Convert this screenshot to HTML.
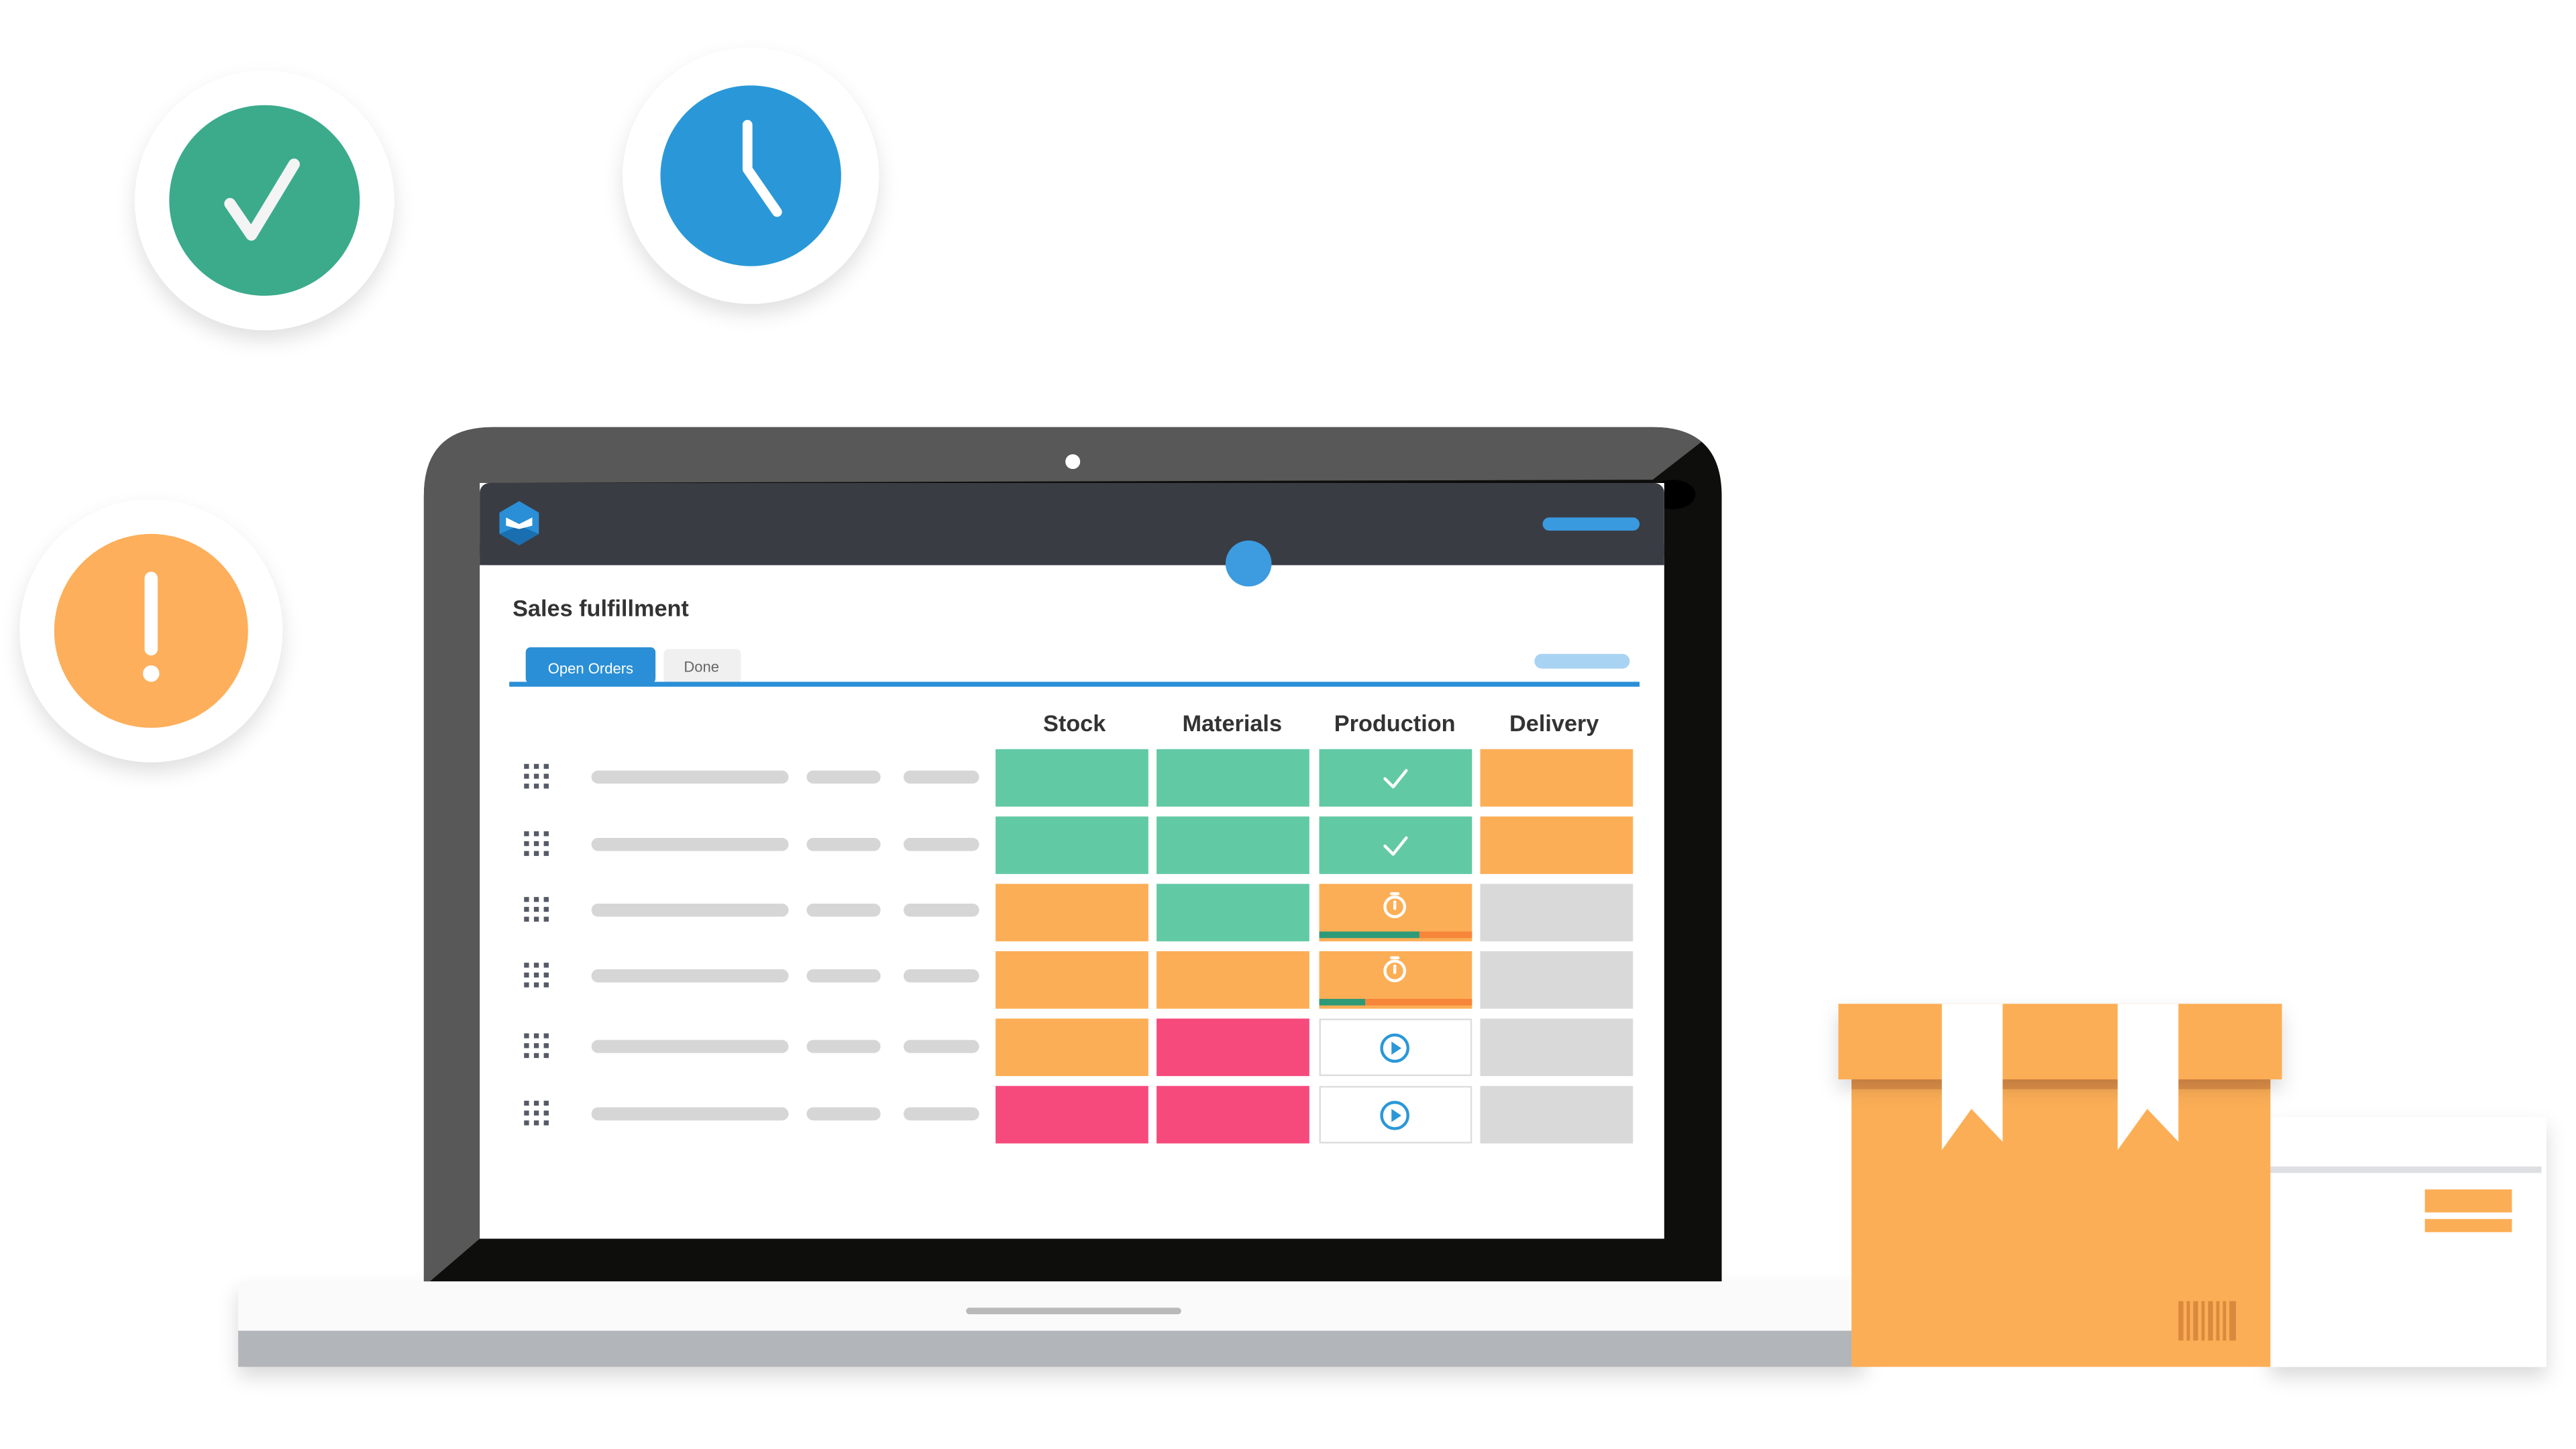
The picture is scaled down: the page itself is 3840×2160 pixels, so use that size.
<!DOCTYPE html>
<html><head><meta charset="utf-8"><style>
html,body{margin:0;padding:0;background:#fff;width:3840px;height:2160px;overflow:hidden}
svg{display:block}
text{font-family:"Liberation Sans",sans-serif}
</style></head><body>
<svg width="3840" height="2160" viewBox="0 0 1568 882" preserveAspectRatio="none" xmlns="http://www.w3.org/2000/svg">
<defs>
<filter id="sh" x="-30%" y="-30%" width="160%" height="170%"><feDropShadow dx="0" dy="6" stdDeviation="6" flood-color="#000" flood-opacity="0.12"/></filter>
<filter id="sh2" x="-10%" y="-30%" width="120%" height="170%"><feDropShadow dx="0" dy="6" stdDeviation="6" flood-color="#000" flood-opacity="0.15"/></filter>
<clipPath id="lid"><path d="M258 780 L258 302 Q258 260 300 260 L1006 260 Q1048 260 1048 302 L1048 780 Z"/></clipPath>
</defs>
<!-- floating circles -->
<circle cx="161" cy="122" r="79" fill="#fff" filter="url(#sh)"/>
<circle cx="161" cy="122" r="58" fill="#3bab8c"/>
<path d="M140 124 L153 143 L179 100" fill="none" stroke="#f4f4f4" stroke-width="7" stroke-linecap="round" stroke-linejoin="round"/>
<circle cx="457" cy="107" r="78" fill="#fff" filter="url(#sh)"/>
<circle cx="457" cy="107" r="55" fill="#2a98d8"/>
<path d="M455 76 L455 103 L473 129" fill="none" stroke="#fff" stroke-width="6" stroke-linecap="round" stroke-linejoin="round"/>
<circle cx="92" cy="384" r="80" fill="#fff" filter="url(#sh)"/>
<circle cx="92" cy="384" r="59" fill="#fdaf5c"/>
<line x1="92" y1="352" x2="92" y2="395" stroke="#fff" stroke-width="8" stroke-linecap="round"/>
<circle cx="92" cy="410" r="5" fill="#fff"/>
<!-- laptop lid -->
<path d="M258 780 L258 302 Q258 260 300 260 L1006 260 Q1048 260 1048 302 L1048 780 Z" fill="#0e0e0d"/>
<path clip-path="url(#lid)" d="M250 790 L292 754 L292 294 L1006 292 L1060 250 L250 250 Z" fill="#585858"/>
<ellipse cx="1018" cy="301" rx="14" ry="9" fill="#000"/>
<circle cx="653" cy="281" r="4.5" fill="#fff"/>
<rect x="292" y="294" width="721" height="460" fill="#fff"/>
<rect x="292" y="294" width="721" height="50" rx="6" fill="#3a3c44"/>
<rect x="292" y="330" width="721" height="14" fill="#3a3c44"/>
<!-- logo -->
<path d="M316 305 L328 312 L328 325 L316 332 L304 325 L304 312 Z" fill="#2a8fd6"/>
<path d="M316 320 L328 325 L316 332 L304 325 Z" fill="#1a6fb0"/>
<path d="M308 315 L316 319 L324 315 L324 320 L316 322 L308 320 Z" fill="#fff"/>
<rect x="939" y="315" width="59" height="8" rx="4" fill="#3a9ae0"/>
<circle cx="760" cy="343" r="14" fill="#3d9be0"/>
<text x="312" y="375" font-size="14" font-weight="bold" fill="#333">Sales fulfillment</text>
<rect x="320" y="394" width="79" height="22" rx="3" fill="#2a8fd6"/>
<text x="359.5" y="410" font-size="9" fill="#fff" text-anchor="middle">Open Orders</text>
<rect x="404" y="395" width="47" height="21" rx="3" fill="#f0f0f0"/>
<text x="427" y="409" font-size="9" fill="#666" text-anchor="middle">Done</text>
<rect x="310" y="415" width="688" height="3" fill="#2a8fd6"/>
<rect x="934" y="398" width="58" height="9" rx="4.5" fill="#a9d3f2"/>
<g font-size="14" font-weight="bold" fill="#333" text-anchor="middle">
<text x="654" y="445">Stock</text><text x="750" y="445">Materials</text><text x="849" y="445">Production</text><text x="946" y="445">Delivery</text>
</g>
<!-- rows -->
<g fill="#d6d6d6">
<rect x="360" y="469" width="120" height="8" rx="4"/><rect x="491" y="469" width="45" height="8" rx="4"/><rect x="550" y="469" width="46" height="8" rx="4"/>
<rect x="360" y="510" width="120" height="8" rx="4"/><rect x="491" y="510" width="45" height="8" rx="4"/><rect x="550" y="510" width="46" height="8" rx="4"/>
<rect x="360" y="550" width="120" height="8" rx="4"/><rect x="491" y="550" width="45" height="8" rx="4"/><rect x="550" y="550" width="46" height="8" rx="4"/>
<rect x="360" y="590" width="120" height="8" rx="4"/><rect x="491" y="590" width="45" height="8" rx="4"/><rect x="550" y="590" width="46" height="8" rx="4"/>
<rect x="360" y="633" width="120" height="8" rx="4"/><rect x="491" y="633" width="45" height="8" rx="4"/><rect x="550" y="633" width="46" height="8" rx="4"/>
<rect x="360" y="674" width="120" height="8" rx="4"/><rect x="491" y="674" width="45" height="8" rx="4"/><rect x="550" y="674" width="46" height="8" rx="4"/>
</g>
<g fill="#555a66">
<g id="dots"><rect x="319" y="465" width="3" height="3"/><rect x="325" y="465" width="3" height="3"/><rect x="331" y="465" width="3" height="3"/><rect x="319" y="471" width="3" height="3"/><rect x="325" y="471" width="3" height="3"/><rect x="331" y="471" width="3" height="3"/><rect x="319" y="477" width="3" height="3"/><rect x="325" y="477" width="3" height="3"/><rect x="331" y="477" width="3" height="3"/></g>
<use href="#dots" y="41"/><use href="#dots" y="81"/><use href="#dots" y="121"/><use href="#dots" y="164"/><use href="#dots" y="205"/>
</g>
<!-- cells -->
<g>
<rect x="606" y="456" width="93" height="35" fill="#62c9a5"/><rect x="704" y="456" width="93" height="35" fill="#62c9a5"/><rect x="803" y="456" width="93" height="35" fill="#62c9a5"/><rect x="901" y="456" width="93" height="35" fill="#fcae56"/>
<rect x="606" y="497" width="93" height="35" fill="#62c9a5"/><rect x="704" y="497" width="93" height="35" fill="#62c9a5"/><rect x="803" y="497" width="93" height="35" fill="#62c9a5"/><rect x="901" y="497" width="93" height="35" fill="#fcae56"/>
<rect x="606" y="538" width="93" height="35" fill="#fcae56"/><rect x="704" y="538" width="93" height="35" fill="#62c9a5"/><rect x="803" y="538" width="93" height="35" fill="#fcae56"/><rect x="901" y="538" width="93" height="35" fill="#d9d9d9"/>
<rect x="606" y="579" width="93" height="35" fill="#fcae56"/><rect x="704" y="579" width="93" height="35" fill="#fcae56"/><rect x="803" y="579" width="93" height="35" fill="#fcae56"/><rect x="901" y="579" width="93" height="35" fill="#d9d9d9"/>
<rect x="606" y="620" width="93" height="35" fill="#fcae56"/><rect x="704" y="620" width="93" height="35" fill="#f64a7d"/><rect x="803.5" y="620.5" width="92" height="34" fill="#fff" stroke="#ddd"/><rect x="901" y="620" width="93" height="35" fill="#d9d9d9"/>
<rect x="606" y="661" width="93" height="35" fill="#f64a7d"/><rect x="704" y="661" width="93" height="35" fill="#f64a7d"/><rect x="803.5" y="661.5" width="92" height="34" fill="#fff" stroke="#ddd"/><rect x="901" y="661" width="93" height="35" fill="#d9d9d9"/>
</g>
<rect x="803" y="567" width="61" height="4" fill="#2e9a78"/><rect x="864" y="567" width="32" height="4" fill="#f7853a"/>
<rect x="803" y="608" width="28" height="4" fill="#2e9a78"/><rect x="831" y="608" width="65" height="4" fill="#f7853a"/>
<g fill="none" stroke="#fff" stroke-width="1.8" stroke-linecap="round" stroke-linejoin="round">
<path d="M843 474 L848 479 L856 469"/><path d="M843 515 L848 520 L856 510"/>
<circle cx="849" cy="552" r="6"/><path d="M849 549 L849 553 M847 544 L851 544"/>
<circle cx="849" cy="591" r="6"/><path d="M849 588 L849 592 M847 583 L851 583"/>
</g>
<g fill="none" stroke="#2a98d8" stroke-width="1.8"><circle cx="849" cy="638" r="8"/><circle cx="849" cy="679" r="8"/></g>
<g fill="#2a98d8"><path d="M847 634 L853 638 L847 642 Z"/><path d="M847 675 L853 679 L847 683 Z"/></g>
<!-- base -->
<rect x="145" y="780" width="990" height="52" rx="4" fill="#fafafa" filter="url(#sh2)"/>
<rect x="145" y="810" width="990" height="22" fill="#b2b5ba"/>
<rect x="588" y="796" width="131" height="4" rx="2" fill="#b9b9b9"/>
<!-- white box -->
<rect x="1382" y="680" width="168" height="152" fill="#fff" filter="url(#sh2)"/>
<rect x="1382" y="710" width="165" height="4" fill="#dedfe2"/>
<rect x="1476" y="724" width="53" height="14" fill="#fcae56"/>
<rect x="1476" y="742" width="53" height="8" fill="#fcae56"/>
<!-- orange box -->
<rect x="1127" y="656" width="255" height="176" fill="#fcae56"/>
<rect x="1127" y="656" width="255" height="7" fill="#e3924a"/>
<rect x="1119" y="611" width="270" height="46" fill="#fcae56" filter="url(#sh2)"/>
<path d="M1182 611 L1219 611 L1219 695 L1200 675 L1182 700 Z" fill="#fff"/>
<path d="M1289 611 L1326 611 L1326 695 L1307 675 L1289 700 Z" fill="#fff"/>
<g fill="#d98a3e"><rect x="1326" y="792" width="3" height="24"/><rect x="1331" y="792" width="2" height="24"/><rect x="1335" y="792" width="3" height="24"/><rect x="1340" y="792" width="2" height="24"/><rect x="1344" y="792" width="3" height="24"/><rect x="1349" y="792" width="2" height="24"/><rect x="1353" y="792" width="2" height="24"/><rect x="1357" y="792" width="4" height="24"/></g>
</svg>
</body></html>
